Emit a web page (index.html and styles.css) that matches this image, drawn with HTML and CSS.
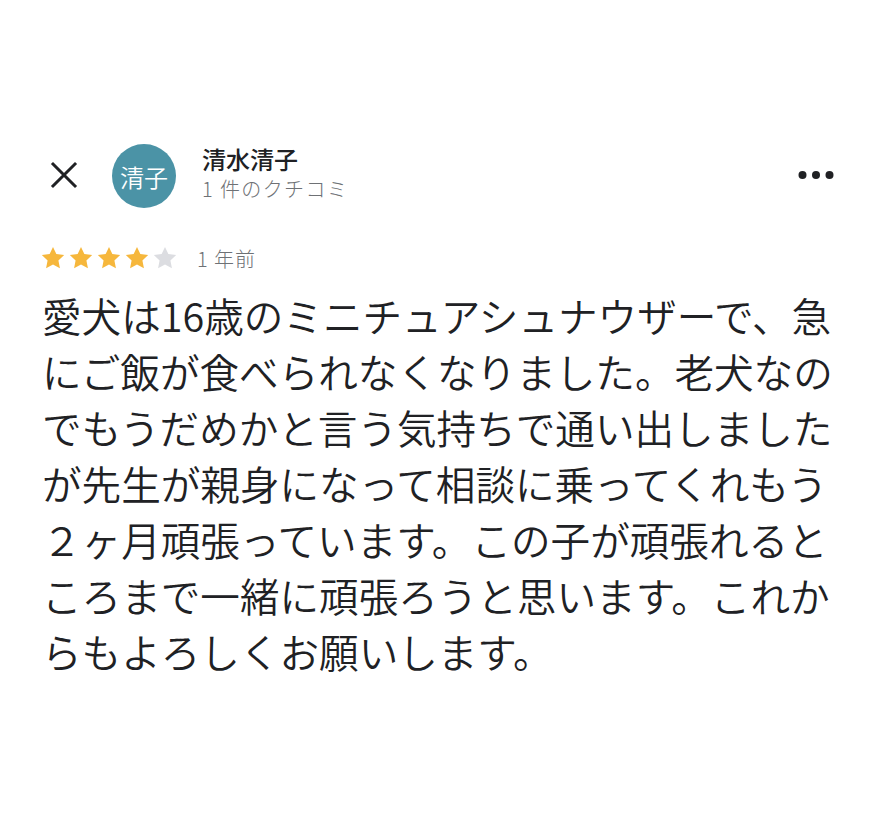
FILE: index.html
```
<!DOCTYPE html>
<html lang="ja">
 <head>
  <meta charset="UTF-8" />
  <meta name="viewport" content="width=device-width, initial-scale=1.0" />
  <title>清水清子のクチコミ</title>
  <link rel="stylesheet" href="styles.css">
 </head>
 <body>
  <div class="review">
   <!-- header -->
   <div class="review-header">
    <button class="close-btn" aria-label="閉じる">
     <svg width="28" height="28" viewBox="0 0 28 28">
      <path d="M3 3 L25 25 M25 3 L3 25" stroke="#202124" stroke-width="3" stroke-linecap="square" fill="none" />
     </svg>
    </button>
    <div class="avatar">清子</div>
    <div class="author">
     <div class="author-name">清水清子</div>
     <div class="author-sub">1 件のクチコミ</div>
    </div>
    <button class="more-btn" aria-label="その他">
     <svg width="36" height="10" viewBox="0 0 36 10">
      <circle cx="4.5" cy="5" r="4" fill="#202124" />
      <circle cx="18" cy="5" r="4" fill="#202124" />
      <circle cx="31.5" cy="5" r="4" fill="#202124" />
     </svg>
    </button>
   </div>
   <!-- rating -->
   <div class="rating">
    <div class="stars">
     <svg class="star on" viewBox="0 0 24 24"><path d="M12 1.8l3.1 6.6 7.2.9-5.3 5 1.4 7.1L12 17.9l-6.4 3.5 1.4-7.1-5.3-5 7.2-.9z" /></svg>
     <svg class="star on" viewBox="0 0 24 24"><path d="M12 1.8l3.1 6.6 7.2.9-5.3 5 1.4 7.1L12 17.9l-6.4 3.5 1.4-7.1-5.3-5 7.2-.9z" /></svg>
     <svg class="star on" viewBox="0 0 24 24"><path d="M12 1.8l3.1 6.6 7.2.9-5.3 5 1.4 7.1L12 17.9l-6.4 3.5 1.4-7.1-5.3-5 7.2-.9z" /></svg>
     <svg class="star on" viewBox="0 0 24 24"><path d="M12 1.8l3.1 6.6 7.2.9-5.3 5 1.4 7.1L12 17.9l-6.4 3.5 1.4-7.1-5.3-5 7.2-.9z" /></svg>
     <svg class="star off" viewBox="0 0 24 24"><path d="M12 1.8l3.1 6.6 7.2.9-5.3 5 1.4 7.1L12 17.9l-6.4 3.5 1.4-7.1-5.3-5 7.2-.9z" /></svg>
    </div>
    <span class="date">1 年前</span>
   </div>
   <!-- body -->
   <p class="review-text">愛犬は16歳のミニチュアシュナウザーで、急<br>にご飯が食べられなくなりました。老犬なの<br>でもうだめかと言う気持ちで通い出しました<br>が先生が親身になって相談に乗ってくれもう<br>２ヶ月頑張っています。この子が頑張れると<br>ころまで一緒に頑張ろうと思います。これか<br>らもよろしくお願いします。</p>
  </div>
 </body>
</html>
```
FILE: styles.css
```
body {
 margin: 0;
 background: #fff;
 font-family: "Noto Sans CJK JP", "Noto Sans", sans-serif;
 color: #202124;
}
.review {
 padding: 142px 46px 0 42px;
}
.review-header {
 display: flex;
 align-items: center;
 height: 66px;
}
button {
 background: none;
 border: none;
 padding: 0;
 cursor: pointer;
 display: flex;
}
.close-btn {
 margin-left: 8px;
}
.avatar {
 width: 64px;
 height: 64px;
 border-radius: 50%;
 background-color: #4b93a6;
 color: #fff;
 font-size: 24px;
 font-weight: 350;
 display: flex;
 align-items: center;
 justify-content: center;
 margin-left: 34px;
 margin-top: 2px;
}
.author {
 margin-left: 26px;
 margin-top: -3px;
}
.author-name {
 font-size: 24px;
 line-height: 30px;
 font-weight: 500;
}
.author-sub {
 font-size: 20px;
 line-height: 30px;
 font-weight: 300;
 color: #6e7175;
 letter-spacing: 1.4px;
}
.more-btn {
 margin-left: auto;
}
.rating {
 display: flex;
 align-items: center;
 margin-top: 37px;
 height: 26px;
}
.stars {
 display: flex;
 gap: 2px;
 margin-left: -2px;
}
.star {
 width: 26px;
 height: 26px;
}
.star.on {
 fill: #f6b73c;
}
.star.off {
 fill: #dcdde1;
}
.date {
 margin-left: 19px;
 font-size: 20px;
 font-weight: 300;
 letter-spacing: 1px;
 color: #6e7175;
}
.review-text {
 margin: 16px 0 0;
 font-size: 39.6px;
 line-height: 56px;
 font-weight: 350;
 color: #202124;
 white-space: nowrap;
}
```
